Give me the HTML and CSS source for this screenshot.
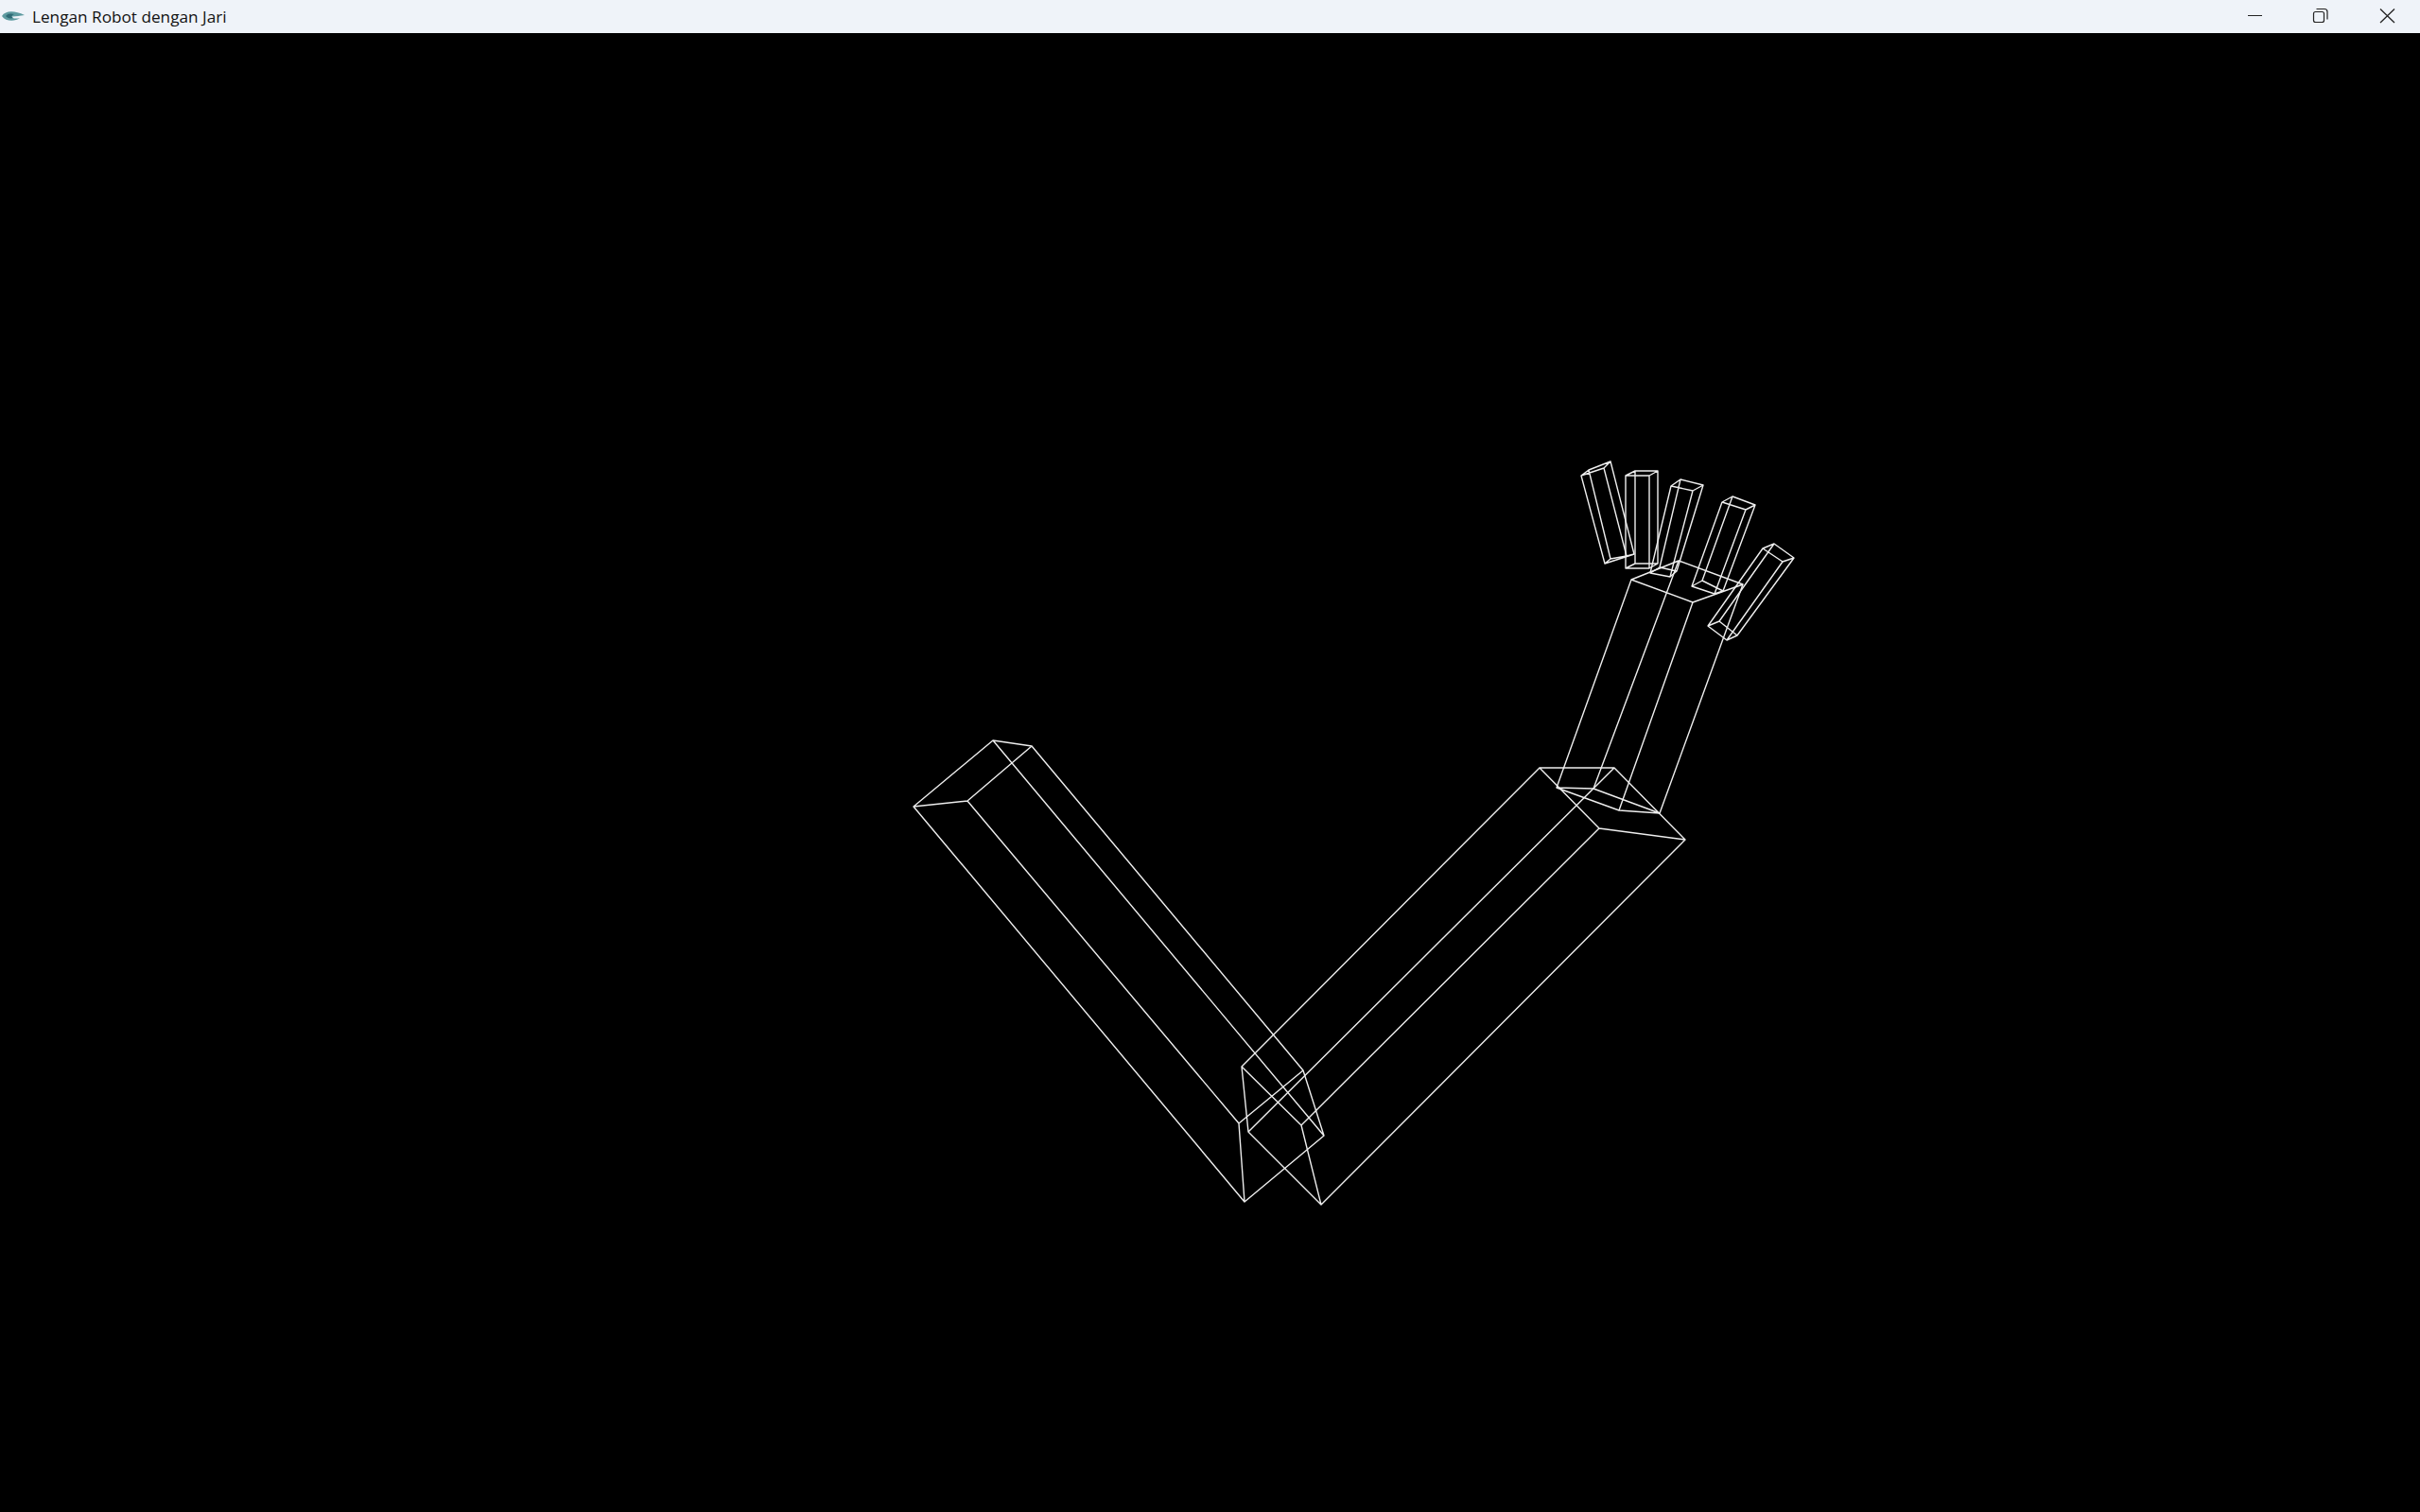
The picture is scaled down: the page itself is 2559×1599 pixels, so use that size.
FILE: index.html
```html
<!DOCTYPE html>
<html lang="id">
<head>
<meta charset="utf-8">
<title>Lengan Robot dengan Jari</title>
<link rel="stylesheet" href="styles.css">
</head>
<body>
<div class="window">
  <header class="titlebar">
    <div class="title-left">
      <svg class="app-icon" width="26" height="14" viewBox="0 0 26 14"><path d="M1 7C5 1 14 1 25 6 18 7 13 8 9 7 12 10 17 10 20 9 15 13 5 13 1 7Z" fill="#5d9aa0"/><path d="M5 7C7 4 11 4 14 5 11 6 11 8 13 9 9 10 7 9 5 7Z" fill="#2f6a75"/></svg>
      <span class="title-text">Lengan Robot dengan Jari</span>
    </div>
    <div class="controls">
      <svg class="ctl" width="70" height="35" viewBox="0 0 70 35"><path d="M29 16.5H44" stroke="#222" stroke-width="1" fill="none"/></svg>
      <svg class="ctl" width="70" height="35" viewBox="0 0 70 35"><rect x="28.5" y="12.5" width="11" height="11" rx="2" stroke="#222" fill="none" stroke-width="1.2"/><path d="M31.5 9.5H40a3 3 0 0 1 3 3V20.5" stroke="#222" fill="none" stroke-width="1.2"/></svg>
      <svg class="ctl" width="70" height="35" viewBox="0 0 70 35"><path d="M29 9.5L44 24M44 9.5L29 24" stroke="#222" fill="none" stroke-width="1.3"/></svg>
    </div>
  </header>
  <main class="viewport">
    <svg class="scene" width="2559" height="1564" viewBox="0 35 2559 1564">
      <g class="wire">
        <path d="M966 853L1023 847L1091 789L1050 783ZM1316 1271L1310 1188L1378 1132L1400 1201ZM966 853L1316 1271M1023 847L1310 1188M1091 789L1378 1132M1050 783L1400 1201"/>
        <path d="M1628 812L1707 812L1782 888L1691 876ZM1313 1128L1376 1190L1397 1274L1320 1197ZM1628 812L1313 1128M1691 876L1376 1190M1782 888L1397 1274M1707 812L1320 1197"/>
        <path d="M1646 833L1685 834L1755 860L1712 857ZM1725 613L1775 593L1843 618L1790 637ZM1646 833L1725 613M1685 834L1775 593M1755 860L1843 618M1712 857L1790 637"/>
        <path d="M1672 503L1680 497L1703 488L1696 495ZM1697 596L1703 591L1720 588L1728 586ZM1672 503L1697 596M1680 497L1703 591M1696 495L1720 588M1703 488L1728 586"/>
        <path d="M1719 503L1729 498L1753 498L1744 503ZM1719 601L1729 596L1753 596L1744 601ZM1719 503V601M1729 498V596M1753 498V596M1744 503V601"/>
        <path d="M1767 514L1777 507L1801 513L1790 519ZM1745 606L1755 600L1773 604L1766 610ZM1767 514L1745 606M1777 507L1755 600M1801 513L1773 604M1790 519L1766 610"/>
        <path d="M1821 531L1832 525L1856 534L1846 539ZM1789 620L1800 614L1822 625L1813 628ZM1821 531L1789 620M1832 525L1800 614M1856 534L1822 625M1846 539L1813 628"/>
        <path d="M1864 580L1876 575L1897 590L1885 594ZM1806 662L1818 657L1837 672L1826 677ZM1864 580L1806 662M1876 575L1818 657M1897 590L1837 672M1885 594L1826 677"/>
      </g>
    </svg>
  </main>
</div>
</body>
</html>
```

FILE: styles.css
```css
html, body {
  margin: 0;
  padding: 0;
  height: 100%;
  background: #000;
  overflow: hidden;
}
.window {
  display: flex;
  flex-direction: column;
  height: 1599px;
  width: 2559px;
}
.titlebar {
  flex: 0 0 35px;
  height: 35px;
  display: flex;
  justify-content: space-between;
  align-items: center;
  background: #eff3f9;
}
.title-left {
  display: flex;
  align-items: center;
  gap: 7px;
  padding-left: 1px;
}
.app-icon {
  display: block;
  margin-top: -2px;
}
.title-text {
  font-family: "Open Sans", "Noto Sans", sans-serif;
  font-size: 17.2px;
  color: #111;
  white-space: nowrap;
}
.controls {
  display: flex;
  padding-right: 1px;
}
.ctl {
  display: block;
}
.viewport {
  flex: 1;
  background: #000;
}
.scene {
  display: block;
}
.wire path {
  fill: none;
  stroke: #eeeeee;
  stroke-width: 1.4;
  stroke-linejoin: round;
}
```
